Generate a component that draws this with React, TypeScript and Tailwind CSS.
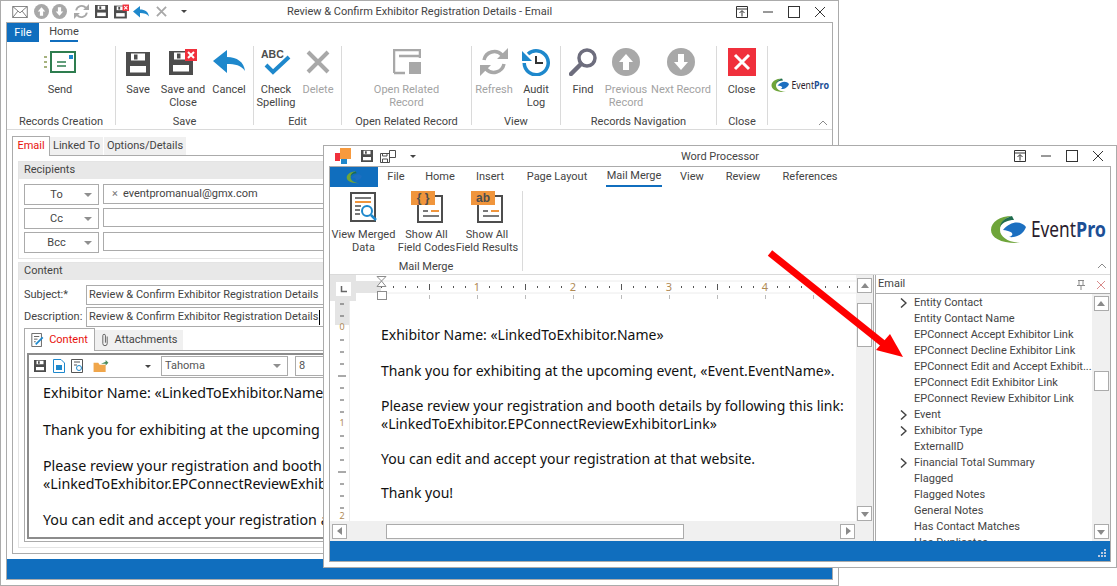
import * as React from "react";

type IconProps = { className?: string };

const SaveIcon = ({ className }: IconProps) => (
  <svg viewBox="0 0 24 24" className={className}>
    <rect width="24" height="24" fill="#4d4d4d" />
    <rect x="5" y="1.5" width="14" height="7" fill="#fff" />
    <rect x="8" y="2.5" width="3.5" height="5" fill="#4d4d4d" />
    <rect x="4" y="14" width="16" height="6.5" fill="#fff" />
  </svg>
);

const SaveCloseIcon = ({ className }: IconProps) => (
  <svg viewBox="0 0 28 26" className={className}>
    <rect y="2" width="24" height="24" fill="#4d4d4d" />
    <rect x="5" y="3.5" width="14" height="7" fill="#fff" />
    <rect x="8" y="4.5" width="3.5" height="5" fill="#4d4d4d" />
    <rect x="4" y="16" width="16" height="6.5" fill="#fff" />
    <rect x="16" y="0" width="12" height="12" fill="#f0303c" />
    <path d="M19 3l6 6M25 3l-6 6" stroke="#fff" strokeWidth="2" />
  </svg>
);

const CancelIcon = ({ className }: IconProps) => (
  <svg viewBox="0 0 32 24" className={className}>
    <path d="M0 11L14 0V7C24 7 31 12 32 21C28 15 22 14 14 14V23Z" fill="#1e88cc" />
  </svg>
);

const SendIcon = ({ className }: IconProps) => (
  <svg viewBox="0 0 32 22" className={className}>
    <rect x="7" y="1" width="24" height="20" fill="#fff" stroke="#2e7d4f" strokeWidth="2" />
    <rect x="25" y="4" width="4" height="4" fill="#1e88cc" />
    <path d="M13 11H22M13 15H22" stroke="#2e7d4f" strokeWidth="1.5" />
    <path d="M0 6H3M0 11H3M0 16H3" stroke="#8a9a55" strokeWidth="1.5" />
  </svg>
);

const SpellIcon = ({ className }: IconProps) => (
  <svg viewBox="0 0 32 28" className={className}>
    <text x="1" y="10" fontSize="10.5" fontWeight="700" fill="#4d4d4d" fontFamily="Liberation Sans, sans-serif">
      ABC
    </text>
    <path d="M6 17L13 24L29 9" fill="none" stroke="#1e88cc" strokeWidth="4" />
  </svg>
);

const CrossIcon = ({ className }: IconProps) => (
  <svg viewBox="0 0 24 24" className={className}>
    <path d="M2 2L22 22M22 2L2 22" stroke="#a8a8a8" strokeWidth="4" />
  </svg>
);

const OpenRelatedIcon = ({ className }: IconProps) => (
  <svg viewBox="0 0 28 26" className={className}>
    <path d="M1 24V1H27V9M6 7H27M1 24H12" fill="none" stroke="#a8a8a8" strokeWidth="2.5" />
    <rect x="16" y="13" width="12" height="12" fill="#a8a8a8" />
  </svg>
);

const RefreshIcon = ({ className }: IconProps) => (
  <svg viewBox="0 0 28 28" className={className}>
    <path
      d="M4 12A10.500 10.500 0 0 1 22 7M24 16A10.500 10.500 0 0 1 6 21"
      fill="none"
      stroke="#a8a8a8"
      strokeWidth="3.500"
    />
    <path d="M17 11H28V0ZM11 17H0V28Z" fill="#a8a8a8" />
  </svg>
);

const AuditIcon = ({ className }: IconProps) => (
  <svg viewBox="0 0 28 28" className={className}>
    <path d="M6 6A12 12 0 1 1 2.200 15" fill="none" stroke="#1e88cc" strokeWidth="3.500" />
    <path d="M0 3V13H10Z" fill="#1e88cc" />
    <path d="M14 8V15H21" fill="none" stroke="#333" strokeWidth="2" />
  </svg>
);

const FindIcon = ({ className }: IconProps) => (
  <svg viewBox="0 0 28 28" className={className}>
    <circle cx="18" cy="10" r="8" fill="none" stroke="#6d6d7d" strokeWidth="3.500" />
    <path d="M12 16L2 26" stroke="#6d6d7d" strokeWidth="4.500" strokeLinecap="round" />
  </svg>
);

const ArrowCircle = ({ className, down }: IconProps & { down?: boolean }) => (
  <svg viewBox="0 0 28 28" className={className}>
    <circle cx="14" cy="14" r="14" fill="#a8a8a8" />
    <path
      d={down ? "M11 6H17V14H21L14 22L7 14H11Z" : "M11 22H17V14H21L14 6L7 14H11Z"}
      fill="#fff"
    />
  </svg>
);

const CloseBoxIcon = ({ className }: IconProps) => (
  <svg viewBox="0 0 28 28" className={className}>
    <rect width="28" height="28" fill="#f0303c" />
    <path d="M7 7L21 21M21 7L7 21" stroke="#fff" strokeWidth="3" />
  </svg>
);

const SwooshPaths = () => (
  <>
    <path d="M22 1C10 1 1 7 1 15C1 23 12 29 30 28C18 27 10 22 10 15C10 8 14 3 22 1Z" fill="#6fa53a" />
    <path d="M22 1C14 3 10 8 10 12C13 7 18 5 24 5Z" fill="#1f6b4f" />
    <path d="M13 15C20 6 31 5 36 12C34 18 28 23 19 22C25 20 23 16 13 15Z" fill="#1c6fc0" />
  </>
);

const Swoosh = ({ className }: IconProps) => (
  <svg viewBox="0 0 38 30" className={className}>
    <SwooshPaths />
  </svg>
);

const Logo = ({ className }: IconProps) => (
  <svg viewBox="0 0 118 30" className={className}>
    <SwooshPaths />
    <text x="41" y="22" fontSize="21" fill="#2a1c2c" fontFamily="Noto Sans, sans-serif" textLength="45" lengthAdjust="spacingAndGlyphs">
      Event
    </text>
    <text x="86" y="22" fontSize="21" fontWeight="700" fill="#1c4f96" fontFamily="Noto Sans, sans-serif" textLength="30" lengthAdjust="spacingAndGlyphs">
      Pro
    </text>
  </svg>
);

const MergedDataIcon = ({ className }: IconProps) => (
  <svg viewBox="0 0 28 30" className={className}>
    <rect x="1" y="1" width="24" height="28" fill="#fff" stroke="#4d4d4d" strokeWidth="2" />
    <path d="M5 6H21M5 14H11M5 18H10M5 22H10" stroke="#4d4d4d" strokeWidth="1.500" />
    <path d="M5 10H21" stroke="#f0953c" strokeWidth="2" />
    <circle cx="17" cy="19" r="5" fill="#fff" stroke="#1e88cc" strokeWidth="2" />
    <path d="M21 23L26 28" stroke="#1e88cc" strokeWidth="2.500" />
  </svg>
);

const FieldIcon = ({ className, tag }: IconProps & { tag: string }) => (
  <svg viewBox="0 0 32 32" className={className}>
    <rect x="7" y="5" width="24" height="26" fill="#fff" stroke="#4d4d4d" strokeWidth="2" />
    <path d="M12 20H17M12 25H28" stroke="#4d4d4d" strokeWidth="1.500" />
    <path d="M20 20H28" stroke="#f0953c" strokeWidth="2" />
    <rect width="24" height="14" fill="#f0953c" />
    <text x="12" y="11" fontSize="12" fontWeight="700" textAnchor="middle" fill="#4d4d4d" fontFamily="Liberation Sans, sans-serif">
      {tag}
    </text>
  </svg>
);

const ScrollArrow = ({ dir, className }: IconProps & { dir: "up" | "down" | "left" | "right" }) => {
  const pts = { up: "1,7 9,7 5,2", down: "1,3 9,3 5,8", left: "7,1 7,9 2,5", right: "3,1 3,9 8,5" }[dir];
  return (
    <svg viewBox="0 0 10 10" className={className ?? "h-[10px] w-[10px]"}>
      <polygon points={pts} fill="#8a8a8a" />
    </svg>
  );
};

const ScrollBtn = ({ dir }: { dir: "up" | "down" | "left" | "right" }) => (
  <div className="flex h-[15px] w-[15px] shrink-0 items-center justify-center border border-[#ababab] bg-white">
    <ScrollArrow dir={dir} />
  </div>
);

const Caret = () => <div className="h-0 w-0 border-x-[4px] border-t-[4px] border-x-transparent border-t-[#8f8f8f]" />;

const WindowButtons = () => (
  <div className="flex items-center justify-end">
    <div className="flex w-[26px] justify-center">
      <svg viewBox="0 0 12 12" className="h-[12px] w-[12px]">
        <path d="M.5.5H11.500V11.500H.5ZM.5 3H11.500M6 10.500V5M3.500 7L6 4.500L8.500 7" fill="none" stroke="#333" />
      </svg>
    </div>
    <div className="flex w-[26px] justify-center">
      <svg viewBox="0 0 12 12" className="h-[12px] w-[12px]">
        <path d="M1 6H11" stroke="#333" />
      </svg>
    </div>
    <div className="flex w-[26px] justify-center">
      <svg viewBox="0 0 12 12" className="h-[12px] w-[12px]">
        <rect x=".5" y=".5" width="11" height="11" fill="none" stroke="#333" />
      </svg>
    </div>
    <div className="flex w-[26px] justify-center">
      <svg viewBox="0 0 12 12" className="h-[12px] w-[12px]">
        <path d="M1 1L11 11M11 1L1 11" stroke="#333" />
      </svg>
    </div>
    <div className="w-[5px]" />
  </div>
);

function RibbonButton({
  width,
  icon,
  lines,
  disabled,
}: {
  width: number;
  icon: React.ReactNode;
  lines: string[];
  disabled?: boolean;
}) {
  return (
    <div className="flex shrink-0 flex-col items-center pt-[2px]" style={{ width }}>
      <div className="flex h-[28px] items-center justify-center">{icon}</div>
      <div className={`mt-[7px] text-center leading-[13px] whitespace-nowrap ${disabled ? "text-[#a3a3a3]" : "text-[#444]"}`}>
        {lines.map((line) => (
          <div key={line}>{line}</div>
        ))}
      </div>
    </div>
  );
}

function RibbonGroup({ width, label, children }: { width: number; label: string; children: React.ReactNode }) {
  return (
    <div className="flex h-[79px] shrink-0 flex-col border-r border-[#dadada]" style={{ width }}>
      <div className="flex h-[67px] shrink-0">{children}</div>
      <div className="h-[16px] shrink-0 text-center leading-[18px] whitespace-nowrap text-[#444]">{label}</div>
    </div>
  );
}

const quickBox = "flex h-[16px] w-[18px] items-center justify-center";

function EmailWindow() {
  return (
    <div className="absolute top-0 left-0 flex h-[586px] w-[839px] flex-col border border-[#ababab] bg-white px-[5px] pb-[5px]">
      <div className="-mx-[5px] grid h-[21px] shrink-0 grid-cols-[1fr_auto_1fr] items-center">
        <div className="flex items-center pl-[10px]">
          <svg viewBox="0 0 18 14" className="h-[12px] w-[18px]">
            <path d="M.5.5H17.500V13.500H.5ZM.5.5L9 8L17.500.5M.5 13.500L6.500 6M17.500 13.500L11.500 6" fill="none" stroke="#6a6a6a" />
          </svg>
          <div className={`${quickBox} ml-[3px]`}><ArrowCircle className="h-[15px] w-[15px]" /></div>
          <div className={quickBox}><ArrowCircle down className="h-[15px] w-[15px]" /></div>
          <div className={`${quickBox} ml-[4px]`}><RefreshIcon className="h-[15px] w-[15px]" /></div>
          <div className={`${quickBox} ml-[2px]`}><SaveIcon className="h-[13px] w-[13px]" /></div>
          <div className={`${quickBox} ml-[2px]`}><SaveCloseIcon className="h-[15px] w-[15px]" /></div>
          <div className={`${quickBox} ml-[2px]`}><CancelIcon className="h-[12px] w-[16px]" /></div>
          <div className={`${quickBox} ml-[2px]`}><CrossIcon className="h-[11px] w-[11px]" /></div>
          <div className={`${quickBox} ml-[5px]`}>
            <div className="h-0 w-0 border-x-[3px] border-t-[3px] border-x-transparent border-t-[#444]" />
          </div>
        </div>
        <div className="leading-[21px] whitespace-nowrap text-[#444]">Review &amp; Confirm Exhibitor Registration Details - Email</div>
        <WindowButtons />
      </div>

      <div className="flex min-h-0 flex-1 flex-col overflow-hidden border border-[#ababab]">
        <div className="flex h-[19px] shrink-0 items-stretch">
          <div className="flex w-[32px] items-center justify-center bg-[#106ebe] pt-[1px] text-white">File</div>
          <div className="ml-[11px] flex w-[28px] items-center justify-center border-b-2 border-[#106ebe] pt-[2px] text-[#444]">Home</div>
        </div>
        <div className="flex h-[88px] shrink-0 items-start border-b border-[#dadada] pt-[4px]">
          <RibbonGroup width={109} label="Records Creation">
            <RibbonButton width={106} icon={<SendIcon className="h-[22px] w-[32px]" />} lines={["Send"]} />
          </RibbonGroup>
          <RibbonGroup width={138} label="Save">
            <RibbonButton width={44} icon={<SaveIcon className="mt-[3px] h-[24px] w-[24px]" />} lines={["Save"]} />
            <RibbonButton width={46} icon={<SaveCloseIcon className="h-[28px] w-[28px]" />} lines={["Save and", "Close"]} />
            <RibbonButton width={46} icon={<CancelIcon className="h-[24px] w-[32px]" />} lines={["Cancel"]} />
          </RibbonGroup>
          <RibbonGroup width={88} label="Edit">
            <RibbonButton width={44} icon={<SpellIcon className="h-[28px] w-[32px]" />} lines={["Check", "Spelling"]} />
            <RibbonButton width={40} icon={<CrossIcon className="h-[24px] w-[24px]" />} lines={["Delete"]} disabled />
          </RibbonGroup>
          <RibbonGroup width={130} label="Open Related Record">
            <RibbonButton width={129} icon={<OpenRelatedIcon className="h-[26px] w-[28px]" />} lines={["Open Related", "Record"]} disabled />
          </RibbonGroup>
          <RibbonGroup width={89} label="View">
            <RibbonButton width={44} icon={<RefreshIcon className="h-[28px] w-[28px]" />} lines={["Refresh"]} disabled />
            <RibbonButton width={40} icon={<AuditIcon className="h-[28px] w-[28px]" />} lines={["Audit", "Log"]} />
          </RibbonGroup>
          <RibbonGroup width={156} label="Records Navigation">
            <RibbonButton width={44} icon={<FindIcon className="h-[28px] w-[28px]" />} lines={["Find"]} />
            <RibbonButton width={42} icon={<ArrowCircle className="h-[28px] w-[28px]" />} lines={["Previous", "Record"]} disabled />
            <RibbonButton width={68} icon={<ArrowCircle down className="h-[28px] w-[28px]" />} lines={["Next Record"]} disabled />
          </RibbonGroup>
          <RibbonGroup width={51} label="Close">
            <RibbonButton width={49} icon={<CloseBoxIcon className="h-[28px] w-[28px]" />} lines={["Close"]} />
          </RibbonGroup>
          <div className="relative flex h-[79px] flex-1 justify-center pt-[32px]">
            <Logo className="h-[15px] w-[59px]" />
            <svg viewBox="0 0 10 6" className="absolute right-[4px] -bottom-[1px] h-[6px] w-[10px]">
              <path d="M1 5L5 1L9 5" fill="none" stroke="#8a8a8a" />
            </svg>
          </div>
        </div>

        <div className="flex min-h-0 flex-1 flex-col px-[5px] pt-[5px] pb-[5px]">
          <div className="flex h-[20px] shrink-0 items-end">
            <div className="-mb-[1px] z-10 flex h-[20px] w-[38px] items-center justify-center border border-b-0 border-[#ababab] bg-white text-[#e8120c]">Email</div>
            <div className="flex h-[18px] w-[53px] items-center justify-center bg-[#f0f0f0] text-[#444]">Linked To</div>
            <div className="ml-[1px] flex h-[18px] w-[82px] items-center justify-center bg-[#f0f0f0] text-[#444]">Options/Details</div>
          </div>
          <div className="flex min-h-0 flex-1 flex-col gap-[3px] border border-[#ababab] p-[5px]">
            <div className="flex h-[98px] shrink-0 flex-col border border-[#e4e4e4]">
              <div className="flex h-[17px] items-center bg-[#e8e8e8] pl-[5px] text-[#444]">Recipients</div>
              <div className="flex flex-col gap-[3px] pt-[5px] pl-[5px]">
                {["To", "Cc", "Bcc"].map((name, i) => (
                  <div key={name} className="flex gap-[4px]">
                    <div className="relative flex h-[21px] w-[75px] shrink-0 items-center justify-center border border-[#ababab] pt-[1px] pr-[10px] text-[#444]">
                      {name}
                      <div className="absolute right-[6px]">
                        <Caret />
                      </div>
                    </div>
                    <div className={`flex flex-1 items-center border border-[#ababab] pl-[8px] text-[#444] ${i === 0 ? "h-[20px]" : "h-[19px]"}`}>
                      {i === 0 && (
                        <>
                          <span className="mr-[5px] text-[#777]">×</span>
                          <span>eventpromanual@gmx.com</span>
                        </>
                      )}
                    </div>
                  </div>
                ))}
              </div>
            </div>

            <div className="flex min-h-0 flex-1 flex-col border border-[#e4e4e4]">
              <div className="flex h-[17px] shrink-0 items-center bg-[#e8e8e8] pl-[5px] text-[#444]">Content</div>
              <div className="flex flex-col gap-[2px] pt-[5px] pl-[5px]">
                <div className="flex items-center">
                  <div className="w-[62px] text-[#444]">Subject:*</div>
                  <div className="flex h-[20px] flex-1 items-center border border-[#ababab] pl-[2px] whitespace-nowrap text-[#444]">Review &amp; Confirm Exhibitor Registration Details</div>
                </div>
                <div className="flex items-center">
                  <div className="w-[62px] text-[#444]">Description:</div>
                  <div className="flex h-[20px] flex-1 items-center border border-[#ababab] pl-[2px] whitespace-nowrap text-[#444]">
                    Review &amp; Confirm Exhibitor Registration Details
                    <span className="ml-[1px] h-[15px] w-[1px] bg-black" />
                  </div>
                </div>
              </div>

              <div className="flex min-h-0 flex-1 flex-col px-[5px] pt-[1px] pb-[5px]">
                <div className="flex h-[22px] shrink-0 items-end">
                  <div className="z-10 -mb-[1px] flex h-[23px] w-[71px] items-center justify-center gap-[5px] border border-b-0 border-[#ababab] bg-white text-[#e8120c]">
                    <svg viewBox="0 0 14 16" className="h-[14px] w-[13px]">
                      <path d="M.5.5H11.500V15.500H.5ZM3 4H9M3 7H7M3 10H5" fill="none" stroke="#555" />
                      <path d="M5 13L13 5" stroke="#1e88cc" strokeWidth="2" />
                    </svg>
                    Content
                  </div>
                  <div className="flex h-[20px] w-[88px] items-center justify-center gap-[6px] bg-[#f0f0f0] text-[#444]">
                    <svg viewBox="0 0 8 16" className="h-[14px] w-[8px]">
                      <path d="M6.500 4V12A2.500 2.500 0 0 1 1.500 12V3A1.500 1.500 0 0 1 4.500 3V11" fill="none" stroke="#555" />
                    </svg>
                    Attachments
                  </div>
                </div>
                <div className="flex min-h-0 flex-1 flex-col border border-[#ababab] p-[2px]">
                  <div className="flex min-h-0 flex-1 flex-col border-2 border-[#8c8c8c]">
                    <div className="flex h-[23px] shrink-0 items-center border-b border-[#ababab] pl-[5px]">
                      <SaveIcon className="h-[12px] w-[12px]" />
                      <svg viewBox="0 0 12 14" className="ml-[7px] h-[14px] w-[12px]">
                        <path d="M.5.5H8L11.500 4V13.500H.5Z" fill="#fff" stroke="#1e88cc" />
                        <rect x="3" y="6" width="6" height="5" fill="#1e88cc" />
                      </svg>
                      <svg viewBox="0 0 13 14" className="ml-[6px] h-[14px] w-[13px]">
                        <path d="M.5.5H11.500V13.500H.5ZM3 3H9M3 6H6" fill="none" stroke="#555" />
                        <circle cx="8" cy="9" r="2.500" fill="#fff" stroke="#1e88cc" />
                      </svg>
                      <svg viewBox="0 0 16 14" className="ml-[9px] h-[13px] w-[16px]">
                        <path d="M0 3H5L6.500 5H13V13H0Z" fill="#f0a64b" />
                        <path d="M8 4L13 2V0L16 3L13 6V4Z" fill="#4a8a5a" />
                      </svg>
                      <div className="ml-[36px] h-0 w-0 border-x-[3px] border-t-[3px] border-x-transparent border-t-[#444]" />
                      <div className="relative ml-[10px] flex h-[20px] w-[127px] items-center border border-[#ababab] pl-[3px] text-[#555]">
                        Tahoma
                        <div className="absolute right-[6px]">
                          <Caret />
                        </div>
                      </div>
                      <div className="ml-[7px] flex h-[20px] flex-1 items-center border border-[#ababab] pl-[3px] text-[#555]">8</div>
                    </div>
                    <div className="flex-1 pt-[6px] pl-[14px] font-['Noto_Sans',sans-serif] text-[14.25px] leading-[18px] whitespace-nowrap text-[#111]">
                      <div>Exhibitor Name: «LinkedToExhibitor.Name»</div>
                      <div className="mt-[19px]">Thank you for exhibiting at the upcoming event, «Event.EventName».</div>
                      <div className="mt-[18px]">Please review your registration and booth details by following this link:</div>
                      <div>«LinkedToExhibitor.EPConnectReviewExhibitorLink»</div>
                      <div className="mt-[18px]">You can edit and accept your registration at that website.</div>
                    </div>
                  </div>
                </div>
              </div>
            </div>
          </div>
        </div>

        <div className="flex h-[20px] shrink-0 justify-end bg-[#106ebe]" />
      </div>
    </div>
  );
}

function HorizontalRuler() {
  const left = 26;
  const origin = 51; // page margin, in ruler coordinates
  const ticks = Array.from({ length: 40 }, (_, i) => origin + i * 12);
  return (
    <svg width="526" height="26" className="block shrink-0">
      <rect width="526" height="26" fill="#fff" />
      <rect width={left} height="26" fill="#e4e4e4" />
      <rect x={left} y="6" width={origin - left} height="12" fill="#e4e4e4" />
      <rect x={origin} y="6" width={526 - origin} height="12" fill="#fff" />
      <path d={`M${origin} 6H526M${origin} 18H526`} stroke="#ececec" />
      <rect x="6" y="7" width="15" height="14" fill="#fff" />
      <path d="M11.500 11V16.500H17" fill="none" stroke="#666" strokeWidth="1.500" />
      {ticks.map((x, i) => {
        const n = i % 8;
        if (n === 0 && i > 0) {
          return (
            <text key={x} x={x} y="16" fontSize="11" textAnchor="middle" fill="#b08a55" fontFamily="Noto Sans, sans-serif">
              {i / 8}
            </text>
          );
        }
        if (n === 4) return <line key={x} x1={x + 0.5} x2={x + 0.5} y1="9" y2="15" stroke="#555" />;
        return <line key={x} x1={x + 0.5} x2={x + 0.5} y1="11" y2="13" stroke="#555" />;
      })}
      {ticks.map((x, i) =>
        i % 4 === 0 && i > 0 ? <line key={`b${x}`} x1={x + 0.5} x2={x + 0.5} y1="20" y2="24" stroke="#bbb" /> : null,
      )}
      <path d="M47 1.500H56L51.500 6ZM47 11.500H56L51.500 6Z" fill="#fff" stroke="#8c8c8c" />
      <rect x="47.500" y="16.500" width="9" height="8" fill="#fff" stroke="#8c8c8c" />
    </svg>
  );
}

function VerticalRuler() {
  return (
    <svg width="20" height="220" className="block shrink-0">
      <rect x="5" width="14" height="220" fill="#fff" />
      <rect x="5" width="14" height="24" fill="#e4e4e4" />
      <line x1="19.500" x2="19.500" y1="0" y2="220" stroke="#ececec" />
      {Array.from({ length: 18 }, (_, i) => {
        const y = 3 + i * 12;
        if (i === 2 || i === 10) {
          return (
            <text key={y} x="12" y={y + 2} fontSize="9" textAnchor="middle" fill="#b08a55" fontFamily="Noto Sans, sans-serif">
              {i === 2 ? "0" : "1"}
            </text>
          );
        }
        const wide = i === 6 || i === 14;
        return <line key={y} x1={wide ? 8 : 10} x2={wide ? 16 : 14} y1={y} y2={y} stroke="#555" />;
      })}
      <text x="12" y="218" fontSize="9" textAnchor="middle" fill="#b08a55" fontFamily="Noto Sans, sans-serif">
        2
      </text>
    </svg>
  );
}

const treeItems: { label: string; more?: boolean }[] = [
  { label: "Entity Contact", more: true },
  { label: "Entity Contact Name" },
  { label: "EPConnect Accept Exhibitor Link" },
  { label: "EPConnect Decline Exhibitor Link" },
  { label: "EPConnect Edit and Accept Exhibit..." },
  { label: "EPConnect Edit Exhibitor Link" },
  { label: "EPConnect Review Exhibitor Link" },
  { label: "Event", more: true },
  { label: "Exhibitor Type", more: true },
  { label: "ExternalID" },
  { label: "Financial Total Summary", more: true },
  { label: "Flagged" },
  { label: "Flagged Notes" },
  { label: "General Notes" },
  { label: "Has Contact Matches" },
  { label: "Has Duplicates" },
];

const ribbonTabs = [
  { label: "File", width: 36 },
  { label: "Home", width: 52 },
  { label: "Insert", width: 48 },
  { label: "Page Layout", width: 86 },
  { label: "Mail Merge", width: 68, active: true },
  { label: "View", width: 48 },
  { label: "Review", width: 54 },
  { label: "References", width: 80 },
];

function WordWindow() {
  return (
    <div className="absolute top-[145px] left-[323px] flex h-[423px] w-[794px] flex-col border border-[#ababab] bg-white px-[5px] pb-[5px]">
      <div className="-mx-[5px] grid h-[20px] shrink-0 grid-cols-[1fr_auto_1fr] items-center">
        <div className="flex items-center pl-[11px]">
          <svg viewBox="0 0 16 16" className="h-[16px] w-[16px]">
            <rect y="5" width="5" height="8" fill="#f0303c" />
            <rect x="5" y="0" width="11" height="11" fill="#f79a3e" />
            <rect x="6" y="11" width="6" height="5" fill="#1e88cc" />
          </svg>
          <SaveIcon className="ml-[10px] h-[12px] w-[12px]" />
          <svg viewBox="0 0 16 13" className="ml-[7px] h-[13px] w-[16px]">
            <path d="M.5 3.500H9.500V12.500H.5ZM2.500 3.500V6H7V3.500M2.500 12.500V9H7.500V12.500M9.500 .5H15.500V7.500H9.500Z" fill="#fff" stroke="#4d4d4d" />
          </svg>
          <div className="ml-[14px] h-0 w-0 border-x-[3px] border-t-[3px] border-x-transparent border-t-[#444]" />
        </div>
        <div className="h-[20px] leading-[22px] whitespace-nowrap text-[#444]">Word Processor</div>
        <WindowButtons />
      </div>

      <div className="flex min-h-0 flex-1 flex-col overflow-hidden border border-[#ababab]">
        <div className="flex h-[20px] shrink-0 items-stretch">
          <div className="flex w-[48px] items-center justify-center bg-[#106ebe]">
            <Swoosh className="h-[13px] w-[17px]" />
          </div>
          <div className="flex">
            {ribbonTabs.map((tab) => (
              <div key={tab.label} className="flex justify-center pt-[1px] text-[#444]" style={{ width: tab.width }}>
                <div className={`flex items-center px-[1px] ${tab.active ? "border-b-2 border-[#106ebe]" : ""}`}>{tab.label}</div>
              </div>
            ))}
          </div>
        </div>
        <div className="relative flex h-[88px] shrink-0 items-start border-b border-[#dadada] pt-[4px]">
          <div className="flex h-[80px] w-[193px] flex-col border-r border-[#dadada]">
            <div className="flex h-[65px] shrink-0">
              <RibbonButton width={67} icon={<MergedDataIcon className="h-[30px] w-[28px]" />} lines={["View Merged", "Data"]} />
              <RibbonButton width={59} icon={<FieldIcon tag="{ }" className="h-[32px] w-[32px]" />} lines={["Show All", "Field Codes"]} />
              <RibbonButton width={62} icon={<FieldIcon tag="ab" className="h-[32px] w-[32px]" />} lines={["Show All", "Field Results"]} />
            </div>
            <div className="mt-[3px] h-[12px] shrink-0 text-center leading-[16px] text-[#444]">Mail Merge</div>
          </div>
          <div className="flex flex-1 justify-end pt-[24px] pr-[2px]">
            <Logo className="h-[30px] w-[118px]" />
          </div>
          <svg viewBox="0 0 10 6" className="absolute right-[3px] bottom-[5px] h-[6px] w-[10px]">
            <path d="M1 5L5 1L9 5" fill="none" stroke="#8a8a8a" />
          </svg>
        </div>

        <div className="flex min-h-0 flex-1">
          <div className="flex w-[544px] shrink-0 flex-col border-r border-[#ababab]">
            <div className="flex h-[246px] shrink-0">
              <div className="flex w-[526px] shrink-0 flex-col overflow-hidden">
                <HorizontalRuler />
                <div className="flex min-h-0 flex-1">
                  <VerticalRuler />
                  <div className="flex-1 pt-[25px] pl-[31px] font-['Noto_Sans',sans-serif] text-[14px] leading-[18px] whitespace-nowrap text-[#111]">
                    <div>Exhibitor Name: «LinkedToExhibitor.Name»</div>
                    <div className="mt-[18px]">Thank you for exhibiting at the upcoming event, «Event.EventName».</div>
                    <div className="mt-[17px]">Please review your registration and booth details by following this link:</div>
                    <div>«LinkedToExhibitor.EPConnectReviewExhibitorLink»</div>
                    <div className="mt-[17px]">You can edit and accept your registration at that website.</div>
                    <div className="mt-[16px]">Thank you!</div>
                  </div>
                </div>
              </div>
              <div className="flex flex-1 flex-col items-center bg-[#f0f0f0] pt-[3px]">
                <ScrollBtn dir="up" />
                <div className="mt-[10px] h-[44px] w-[15px] border border-[#ababab] bg-white" />
                <div className="flex-1" />
                <ScrollBtn dir="down" />
              </div>
            </div>
            <div className="flex flex-1 items-center bg-[#f0f0f0] pl-[2px]">
              <ScrollBtn dir="left" />
              <div className="ml-[39px] h-[15px] w-[298px] border border-[#ababab] bg-white" />
              <div className="flex-1" />
              <div className="mr-[18px]">
                <ScrollBtn dir="right" />
              </div>
            </div>
          </div>

          <div className="ml-[1px] flex min-w-0 flex-1 flex-col border-l border-[#ababab]">
            <div className="flex h-[19px] shrink-0 items-center border-b border-[#ababab] pt-[1px] pl-[2px] text-[#444]">
              <span className="flex-1">Email</span>
              <svg viewBox="0 0 10 10" className="h-[10px] w-[10px]">
                <path d="M2 .5H8M3 .5V5M7 .5V5M1 5.500H9M5 5.500V10" fill="none" stroke="#8a8a8a" />
              </svg>
              <svg viewBox="0 0 10 10" className="mr-[4px] ml-[10px] h-[10px] w-[10px]">
                <path d="M1 1L9 9M9 1L1 9" stroke="#d98b8b" />
              </svg>
            </div>
            <div className="flex min-h-0 flex-1">
              <div className="min-w-0 flex-1 overflow-hidden pt-[1px] text-[#444]">
                {treeItems.map((item) => (
                  <div key={item.label} className="flex h-[16px] items-center whitespace-nowrap">
                    <div className="flex w-[38px] shrink-0 justify-end pr-[7px]">
                      {item.more && (
                        <svg viewBox="0 0 7 10" className="h-[10px] w-[7px]">
                          <path d="M1 .5L6 5L1 9.500" fill="none" stroke="#444" strokeWidth="1.500" />
                        </svg>
                      )}
                    </div>
                    {item.label}
                  </div>
                ))}
              </div>
              <div className="flex w-[18px] shrink-0 flex-col items-center bg-[#f0f0f0] pt-[2px] pb-[2px]">
                <ScrollBtn dir="up" />
                <div className="mt-[60px] h-[20px] w-[15px] border border-[#ababab] bg-white" />
                <div className="flex-1" />
                <ScrollBtn dir="down" />
              </div>
            </div>
          </div>
        </div>

        <div className="relative h-[20px] shrink-0 bg-[#106ebe]">
          <svg viewBox="0 0 10 10" className="absolute right-[4px] bottom-[3px] h-[10px] w-[10px]">
            <path d="M8 1H10V3H8ZM5 4H7V6H5ZM8 4H10V6H8ZM2 7H4V9H2ZM5 7H7V9H5ZM8 7H10V9H8Z" fill="#b9c9e0" />
          </svg>
        </div>
      </div>
    </div>
  );
}

export default function App() {
  return (
    <div className="relative h-[586px] w-[1117px] overflow-hidden bg-white font-['Roboto',sans-serif] text-[11px]">
      <EmailWindow />
      <WordWindow />
      {/* red call-out arrow over both panes */}
      <svg viewBox="0 0 1117 586" className="pointer-events-none absolute inset-0 h-[586px] w-[1117px]">
        <path d="M770 253L885 345" stroke="#fe0000" strokeWidth="7" />
        <polygon points="903,357 876,350 890,334" fill="#fe0000" />
      </svg>
    </div>
  );
}
